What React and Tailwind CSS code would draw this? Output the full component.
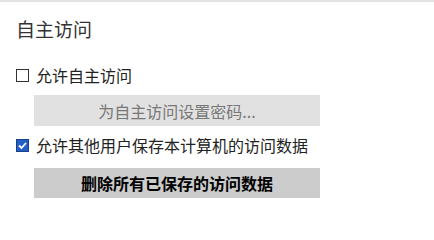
import React, { useState } from 'react';

const font = { fontFamily: '"Microsoft YaHei", "Noto Sans CJK SC", sans-serif' };

// Small square checkbox drawn like the native Windows one
const Box = ({ checked, onClick }) => (
    <span
        onClick={onClick}
        className={
            checked
                ? 'flex h-[13px] w-[13px] items-center justify-center border border-[#1c3f8c] bg-[#2260c8]'
                : 'flex h-[13px] w-[13px] items-center justify-center border border-[#333333] bg-white'
        }
    >
        {checked && (
            <svg width="11" height="11" viewBox="0 0 11 11">
                <path d="M2 5.5 L4.5 8 L9 3" fill="none" stroke="#ffffff" strokeWidth="1.8" />
            </svg>
        )}
    </span>
);

const App = () => {
    const [allowAccess, setAllowAccess] = useState(false);
    const [allowSave, setAllowSave] = useState(true);

    return (
        <div className="h-[211px] w-[434px] border-t-2 border-[#e3e3e3] bg-white" style={font}>
            <div className="pl-4 pt-[14px]">
                <h2 className="text-[19px] leading-[26px] text-[#333333]">自主访问</h2>

                <label className="mt-[20px] flex h-[26px] items-center gap-[7px] text-[16px] text-[#222222]">
                    <Box checked={allowAccess} onClick={() => setAllowAccess(!allowAccess)} />
                    <span>允许自主访问</span>
                </label>

                <button
                    className="ml-[18px] mt-[7px] flex h-[31px] w-[286px] items-center justify-center bg-[#e1e1e1] text-[16px] text-[#777777]"
                    disabled={!allowAccess}
                >
                    为自主访问设置密码...
                </button>

                <label className="mt-[6px] flex h-[26px] items-center gap-[7px] text-[16px] text-[#222222]">
                    <Box checked={allowSave} onClick={() => setAllowSave(!allowSave)} />
                    <span>允许其他用户保存本计算机的访问数据</span>
                </label>

                <button className="ml-[18px] mt-[10px] flex h-[30px] w-[286px] items-center justify-center bg-[#cccccc] text-[16px] font-bold text-black">
                    删除所有已保存的访问数据
                </button>
            </div>
        </div>
    );
};

export default App;
